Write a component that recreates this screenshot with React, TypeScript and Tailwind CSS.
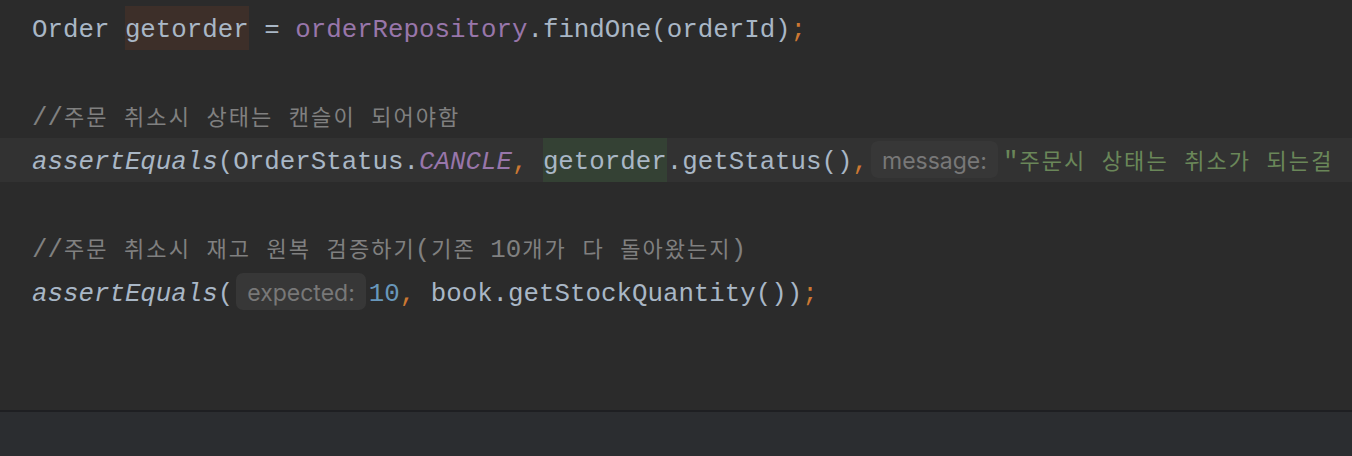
import type { ReactNode } from 'react';

// hangul is drawn on its own fixed grid, like the IDE's fallback font
function K({ text }: { text: string }) {
  return (
    <>
      {Array.from(text).map((ch, i) =>
        /[\uac00-\ud7a3]/.test(ch) ? (
          <span
            key={i}
            className="inline-block w-[22.3px] text-center text-[22px] leading-none [font-family:'Noto_Sans_CJK_KR',sans-serif]"
          >
            {ch}
          </span>
        ) : (
          ch
        ),
      )}
    </>
  );
}

function Hint({ label, className = '' }: { label: string; className?: string }) {
  return (
    <span
      className={`mt-[3px] inline-flex h-[37px] items-center rounded-[7px] bg-[#373737] px-[11px] pt-[3px] align-top text-[23px] leading-none text-[#787878] [font-family:Inter,'Open_Sans',sans-serif] ${className}`}
    >
      {label}
    </span>
  );
}

function Mark({ children, color }: { children: ReactNode; color: string }) {
  return <span className={`inline-block h-[44px] align-top leading-[49px] ${color}`}>{children}</span>;
}

function Line({ children, current }: { children?: ReactNode; current?: boolean }) {
  return (
    <div className={`h-[44px] whitespace-pre pl-[32px] leading-[49px] ${current ? 'bg-[#323232]' : ''}`}>
      {children}
    </div>
  );
}

export default function App() {
  return (
    <div className="flex h-[456px] w-[1352px] flex-col overflow-hidden bg-[#2b2b2b]">
      <div className="h-[410px] pt-[6px] text-[25.8px] text-[#a9b7c6] [font-family:'Liberation_Mono','DejaVu_Sans_Mono',monospace]">
        <Line>
          Order <Mark color="bg-[#3d2f29]">getorder</Mark> ={' '}
          <span className="text-[#9876aa]">orderRepository</span>.findOne(orderId)
          <span className="text-[#cc7832]">;</span>
        </Line>
        <Line />
        <Line>
          <span className="text-[#808080]">
            <K text="//주문 취소시 상태는 캔슬이 되어야함" />
          </span>
        </Line>
        <Line current>
          <span className="italic">assertEquals</span>(OrderStatus.
          <span className="italic text-[#9876aa]">CANCLE</span>
          <span className="text-[#cc7832]">,</span> <Mark color="bg-[#344134]">getorder</Mark>.getStatus()
          <span className="text-[#cc7832]">,</span>
          <Hint label="message:" className="ml-[3px] mr-[5px]" />
          <span className="text-[#6a8759]">
            <K text={'"주문시 상태는 취소가 되는걸'} />
          </span>
        </Line>
        <Line />
        <Line>
          <span className="text-[#808080]">
            <K text="//주문 취소시 재고 원복 검증하기(기존 10개가 다 돌아왔는지)" />
          </span>
        </Line>
        <Line>
          <span className="italic">assertEquals</span>(
          <Hint label="expected:" className="ml-[3px] mr-[3px]" />
          <span className="text-[#6897bb]">10</span>
          <span className="text-[#cc7832]">,</span> book.getStockQuantity())
          <span className="text-[#cc7832]">;</span>
        </Line>
      </div>
      <div className="h-[2px] bg-[#1e1f22]" />
      <div className="flex-1 bg-[#2b2d30]" />
    </div>
  );
}
